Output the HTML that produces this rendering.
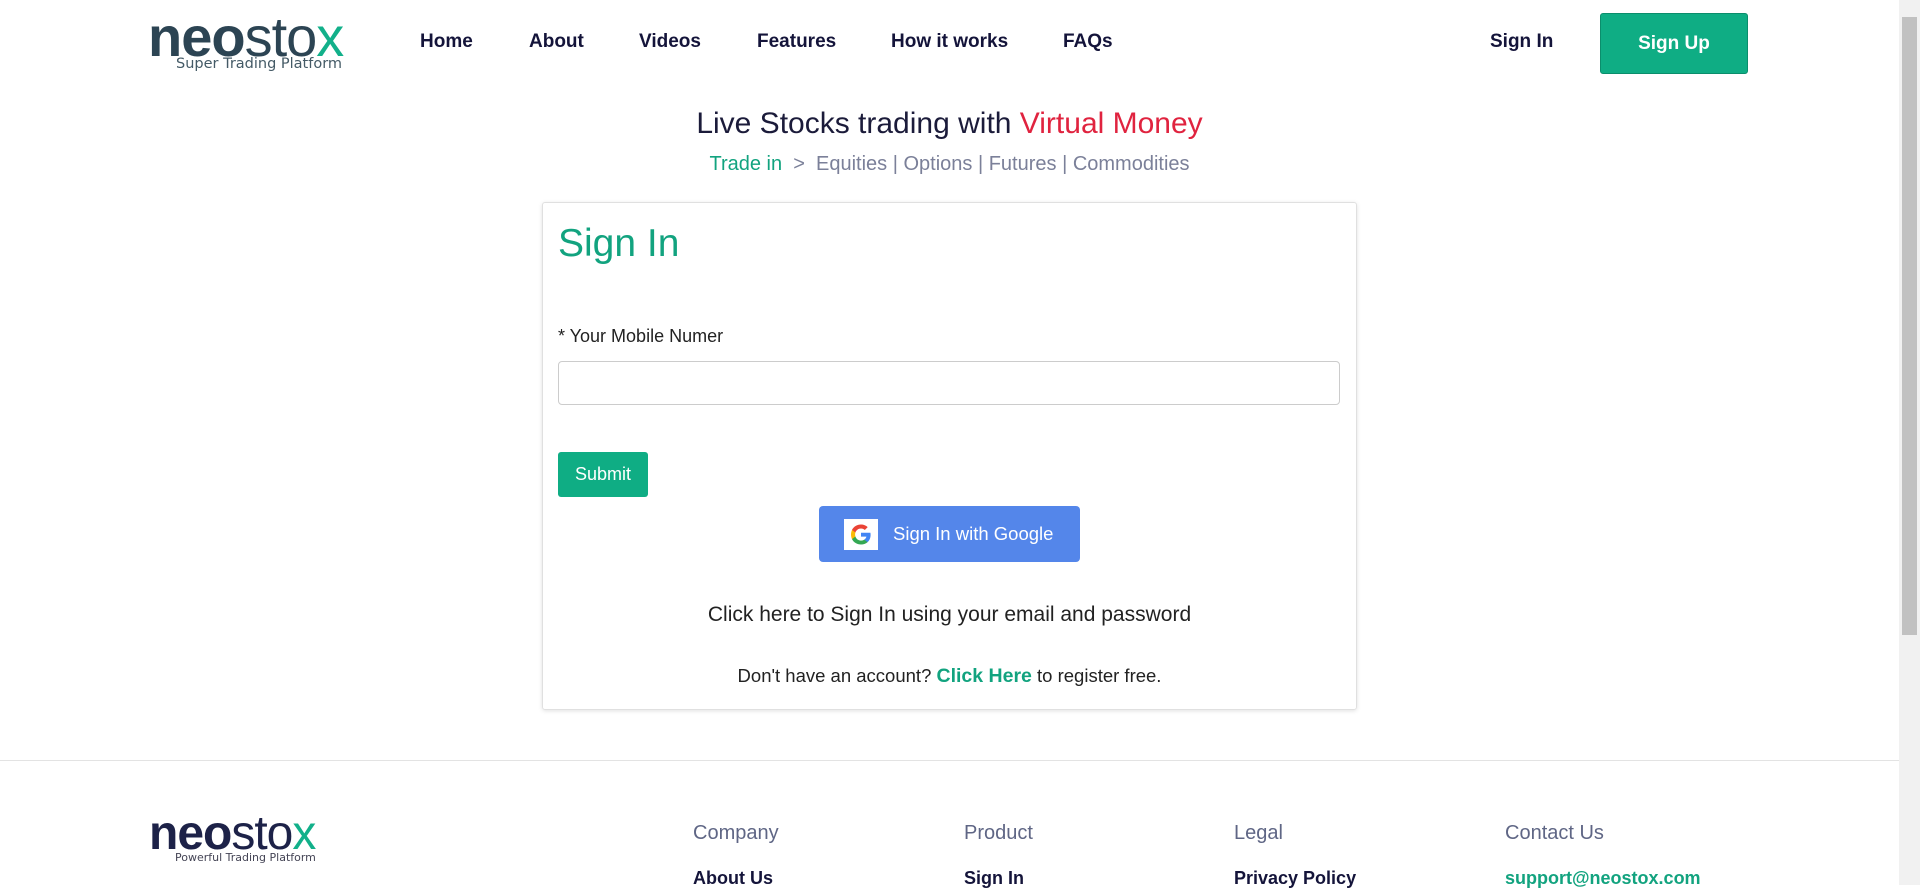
<!DOCTYPE html>
<html><head><meta charset="utf-8"><style>
*{margin:0;padding:0;box-sizing:border-box}
body{width:1920px;height:885px;overflow:hidden;background:#fff;font-family:"Liberation Sans",Arial,sans-serif;position:relative;color:#1b1b3a}
.a{position:absolute;white-space:nowrap}
.nav{top:31px;font-size:19px;font-weight:bold;color:#14143a}
.logo{font-size:56px;letter-spacing:-1px;line-height:1;color:#2c4453}
.g{color:#12b08a}
.fh{top:822px;font-size:20px;color:#5f6685}
.fl{top:868px;font-size:18px;font-weight:bold;color:#14143a}
</style></head><body>
<div class="a logo" style="left:148px;top:9px;font-weight:bold">neo<span style="font-weight:normal">sto</span><span class="g" style="font-weight:normal">x</span></div>
<div class="a" style="left:176px;top:56px;font-size:14.5px;color:#445a66;font-family:'DejaVu Sans',sans-serif">Super Trading Platform</div>
<div class="a nav" style="left:420px">Home</div>
<div class="a nav" style="left:529px">About</div>
<div class="a nav" style="left:639px">Videos</div>
<div class="a nav" style="left:757px">Features</div>
<div class="a nav" style="left:891px">How it works</div>
<div class="a nav" style="left:1063px">FAQs</div>
<div class="a nav" style="left:1490px">Sign In</div>
<div class="a" style="left:1600px;top:13px;width:148px;height:61px;background:#0fad84;border-radius:3px;border:1px solid #0b8e6c;color:#fff;font-weight:bold;font-size:19px;text-align:center;line-height:59px">Sign Up</div>
<div class="a" style="left:0;width:1899px;text-align:center;top:107px;font-size:30px;color:#1b1b3a">Live Stocks trading with <span style="color:#e0233f">Virtual Money</span></div>
<div class="a" style="left:0;width:1899px;text-align:center;top:153px;font-size:20px;color:#7b8099"><span style="color:#12a37f">Trade in</span> &nbsp;&gt;&nbsp; Equities | Options | Futures | Commodities</div>
<div class="a" style="left:542px;top:202px;width:815px;height:508px;border:1px solid #e0e0e0;border-radius:3px;box-shadow:0 1px 4px rgba(0,0,0,.12)"></div>
<div class="a" style="left:558px;top:222px;font-size:39px;color:#12a37f">Sign In</div>
<div class="a" style="left:558px;top:326px;font-size:18px;color:#222">* Your Mobile Numer</div>
<div class="a" style="left:558px;top:361px;width:782px;height:44px;border:1px solid #ccc;border-radius:4px"></div>
<div class="a" style="left:558px;top:452px;width:90px;height:45px;background:#0fad84;border-radius:3px;color:#fff;font-size:18px;text-align:center;line-height:45px">Submit</div>
<div class="a" style="left:819px;top:506px;width:261px;height:56px;background:#5486ea;border-radius:4px"></div>
<div class="a" style="left:844px;top:519px;width:34px;height:31px;background:#fff"></div>
<svg class="a" style="left:849px;top:522px" width="24" height="25" viewBox="0 0 24 24"><path d="M21.6 12.2c0-.7-.1-1.4-.2-2H12v3.9h5.4c-.2 1.2-1 2.3-2.1 3v2.5h3.3c2-1.8 3-4.5 3-7.4z" fill="#4285f4"/><path d="M12 22c2.7 0 5-.9 6.6-2.4l-3.3-2.5c-.9.6-2 1-3.3 1-2.6 0-4.8-1.7-5.6-4.1H3v2.6C4.6 19.8 8 22 12 22z" fill="#34a853"/><path d="M6.4 14c-.2-.6-.3-1.3-.3-2s.1-1.4.3-2V7.4H3C2.4 8.8 2 10.4 2 12s.4 3.2 1 4.6z" fill="#fbbc05"/><path d="M12 6c1.5 0 2.8.5 3.8 1.5l2.9-2.9C17 3 14.7 2 12 2 8 2 4.6 4.2 3 7.4L6.4 10C7.2 7.7 9.4 6 12 6z" fill="#ea4335"/></svg>
<div class="a" style="left:893px;top:523px;font-size:18.5px;color:#fff">Sign In with Google</div>
<div class="a" style="left:542px;width:815px;text-align:center;top:603px;font-size:21px;color:#222">Click here to Sign In using your email and password</div>
<div class="a" style="left:542px;width:815px;text-align:center;top:665px;font-size:18.5px;color:#222">Don't have an account? <b style="color:#12a37f;font-size:19.5px">Click Here</b> to register free.</div>
<div class="a" style="left:0;top:760px;width:1899px;height:1px;background:#e3e3e3"></div>
<div class="a logo" style="left:149px;top:810px;font-size:48px;font-weight:bold;color:#1d2248;letter-spacing:-1px">neo<span style="font-weight:normal">sto</span><span class="g" style="font-weight:normal">x</span></div>
<div class="a" style="left:175px;top:851px;font-size:11px;color:#445;font-family:'DejaVu Sans',sans-serif">Powerful Trading Platform</div>
<div class="a fh" style="left:693px">Company</div>
<div class="a fh" style="left:964px">Product</div>
<div class="a fh" style="left:1234px">Legal</div>
<div class="a fh" style="left:1505px">Contact Us</div>
<div class="a fl" style="left:693px">About Us</div>
<div class="a fl" style="left:964px">Sign In</div>
<div class="a fl" style="left:1234px">Privacy Policy</div>
<div class="a fl" style="left:1505px;color:#12a37f">support@neostox.com</div>
<div class="a" style="left:1899px;top:0;width:21px;height:885px;background:#f1f1f1"></div>
<div class="a" style="left:1902px;top:17px;width:15px;height:618px;background:#c1c1c1"></div>
</body></html>
